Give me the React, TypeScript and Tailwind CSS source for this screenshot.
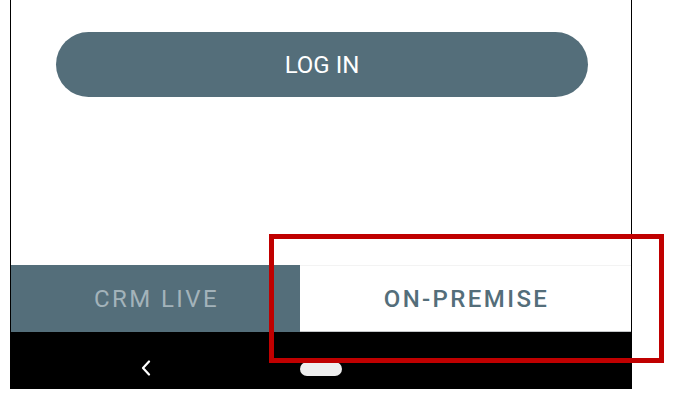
import React from "react";

export default function App() {
  return (
    <div className="relative w-[675px] h-[410px] bg-white overflow-hidden font-['Roboto',_'Liberation_Sans',_sans-serif]">
      <div className="ml-[10px] w-[622px] flex flex-col">
        <div className="border-x border-black flex flex-col">
          <div className="h-[265px] pt-[32px] pl-[45px]">
            <button className="w-[532px] h-[65px] rounded-full bg-[#546e7a] text-white text-[24px] leading-none flex items-center justify-center">
              LOG IN
            </button>
          </div>
          <div className="flex h-[67px]">
            <div className="w-[289px] bg-[#546e7a] flex items-center justify-center text-[24px] tracking-[2.4px] text-[#a3b3ba] pl-[2px]">
              CRM LIVE
            </div>
            <div className="flex-1 bg-white border-t border-t-[#f3f3f3] border-b border-b-[#c4c7c9] flex items-center justify-center text-[24px] font-medium tracking-[2.4px] text-[#546e7a] pl-[2px]">
              ON-PREMISE
            </div>
          </div>
        </div>
        <div className="h-[57px] bg-black flex items-start pt-[28px]">
          <svg className="ml-[131px] w-[10px] h-[16px]" viewBox="0 0 10 16" fill="none">
            <polyline points="8,1.5 2,8 8,14.5" stroke="white" strokeWidth="2.2" strokeLinecap="round" strokeLinejoin="round" />
          </svg>
          <div className="ml-[149px] mt-[2px] w-[42px] h-[14px] rounded-full bg-[#eeeeee]" />
        </div>
      </div>
      <div className="absolute left-[269px] top-[234px] w-[395px] h-[129px] border-[5px] border-[#c00000]" />
    </div>
  );
}
